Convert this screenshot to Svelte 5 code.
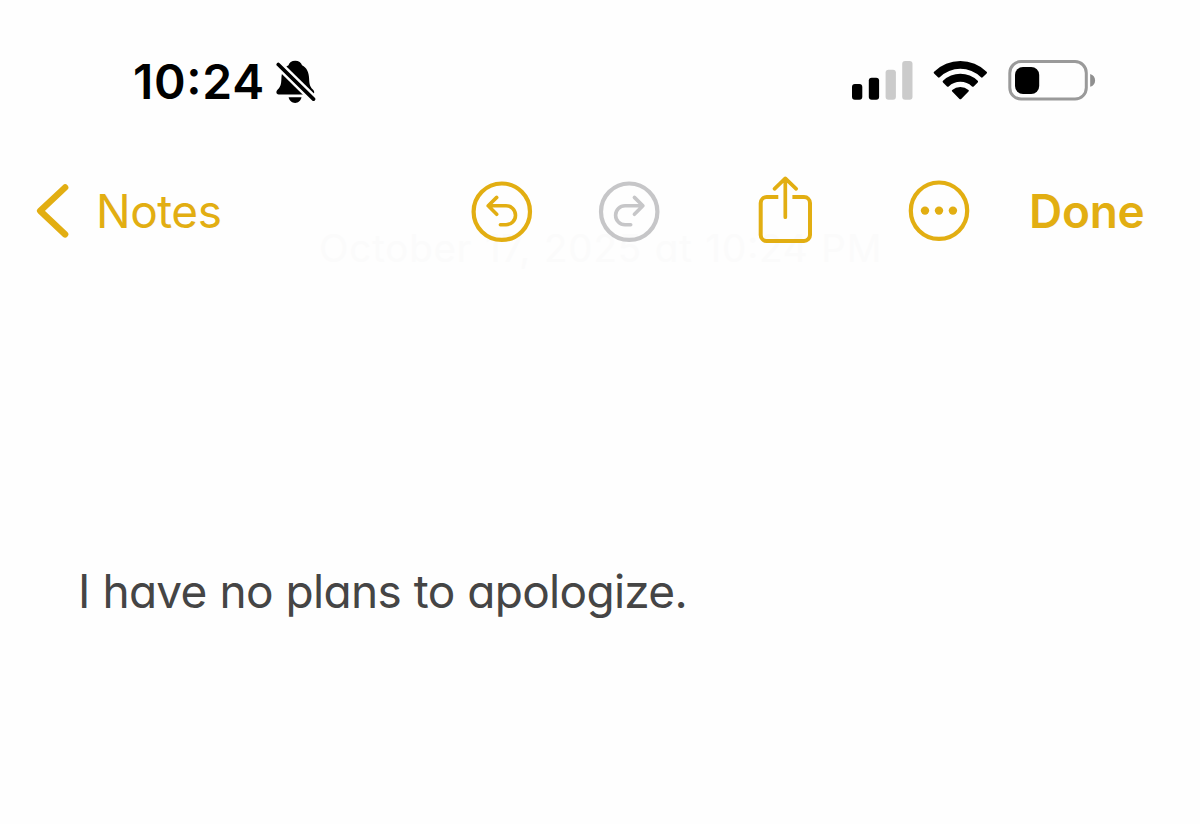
<script>
  const time = '10:24';
  const date = 'October 17, 2025 at 10:24 PM';
  const note = 'I have no plans to apologize.';
  const bars = [
    { x: 0, h: 15.7, on: true },
    { x: 16.8, h: 22, on: true },
    { x: 33.6, h: 30, on: false },
    { x: 50.2, h: 38.7, on: false }
  ];
</script>

<div class="screen">
  <header class="status">
    <span class="time">{time}</span>
    <svg class="bell" width="42" height="46" viewBox="274 58 42 46" aria-label="Silent">
      <path d="M295.200 60.700c-3.600 0-6 1.900-6.700 4.500-4.800 2.300-6.900 7.100-7.100 13.200-.2 6.700-1.200 8.400-3.400 10.900-1.100 1.200-1.600 2-1.600 3 0 1.300.9 2.100 2.300 2.100h33.100c1.500 0 2.400-.8 2.400-2.100 0-1-.5-1.800-1.600-3-2.200-2.500-3.300-4.200-3.500-10.900-.2-6.100-2.300-10.900-7.100-13.200-.7-2.600-3.200-4.500-6.800-4.500z" />
      <path d="M288.600 97.200h12.900c-.6 3.300-3.200 5.700-6.400 5.700s-5.900-2.400-6.500-5.700z" />
      <path class="cut" d="M275 61.300l42 41.300" />
      <path class="slash" d="M278.300 64.500l35.200 34.600" />
    </svg>
    <svg class="signal" width="62" height="40" viewBox="0 0 62 40" aria-label="Signal">
      {#each bars as b}
        <rect x={b.x} y={38.700 - b.h} width="10.300" height={b.h} rx="2.900" class:off={!b.on} />
      {/each}
    </svg>
    <svg class="wifi" width="56" height="42" viewBox="932 59 56 42" aria-label="Wi-Fi">
      <path d="M934.100 73.400a1.200 1.200 0 0 1 0-1.700a37.500 37.500 0 0 1 52.500 0a1.200 1.200 0 0 1 0 1.700l-3.900 3.900a1.200 1.200 0 0 1-1.700 0a29.500 29.500 0 0 0-41.300 0a1.200 1.200 0 0 1-1.700 0z" />
      <path d="M943 82.400a1.200 1.200 0 0 1 0-1.700a25 25 0 0 1 34.700 0a1.200 1.200 0 0 1 0 1.700l-4 4a1.200 1.200 0 0 1-1.700 0a17 17 0 0 0-23.300 0a1.200 1.200 0 0 1-1.700 0z" />
      <path d="M952.200 91.600a1.200 1.200 0 0 1 0-1.700a12.500 12.500 0 0 1 16.300 0a1.200 1.200 0 0 1 0 1.700l-7.300 7.300a1.200 1.200 0 0 1-1.700 0z" />
    </svg>
    <svg class="battery" width="88" height="42" viewBox="1008 59 88 42" aria-label="Battery">
      <rect class="shell" x="1009.800" y="61.600" width="76.500" height="37.400" rx="11.300" />
      <rect x="1015" y="67" width="24.200" height="27" rx="8" />
      <path class="nub" d="M1090.200 74c3 .8 4.900 3.300 4.900 6.400s-1.900 5.600-4.900 6.400z" />
    </svg>
  </header>

  <nav class="toolbar">
    <svg class="back" width="34" height="56" viewBox="36 183 34 56" aria-hidden="true">
      <path d="M65.100 187.500L40.200 210.800L65.100 234.300" />
    </svg>
    <span class="notes">Notes</span>
    <svg class="undo" width="62" height="62" viewBox="471 181 62 62" aria-label="Undo">
      <circle cx="501.800" cy="211.700" r="28.200" />
      <path d="M496.700 197.400L488.200 205.700L496.700 214.300M488.200 205.700H506a9.500 9.500 0 0 1 0 19H500.400" />
    </svg>
    <svg class="redo" width="62" height="62" viewBox="598 181 62 62" aria-label="Redo">
      <circle cx="629.200" cy="211.700" r="28.200" />
      <path d="M634.400 197.400L642.900 205.700L634.400 214.300M642.900 205.700H625.100a9.500 9.500 0 0 0 0 19H630.700" />
    </svg>
    <svg class="share" width="56" height="70" viewBox="757 175 56 70" aria-label="Share">
      <path class="box" d="M778.300 197.100H766.700a6 6 0 0 0-6 6V234.900a6 6 0 0 0 6 6H804a6 6 0 0 0 6-6V203.100a6 6 0 0 0-6-6H792.400" />
      <path d="M774.500 188.800L785.300 178.400L796.200 188.800M785.300 178.400V217.200" />
    </svg>
    <svg class="more" width="62" height="62" viewBox="908 180 62 62" aria-label="More">
      <circle cx="939" cy="210.700" r="28.200" />
      <g class="dots">
        <circle cx="925" cy="210.600" r="4.200" />
        <circle cx="939" cy="210.600" r="4.200" />
        <circle cx="952.900" cy="210.600" r="4.200" />
      </g>
    </svg>
    <span class="done">Done</span>
    <div class="date">{date}</div>
  </nav>

  <main>
    <p>{note}</p>
  </main>
</div>

<style>
  :global(body) { background: #fefefe; }
  .screen {
    width: 1200px;
    height: 824px;
    overflow: hidden;
    background: #fefefe;
    font-family: Inter, "Liberation Sans", sans-serif;
    display: flex;
    flex-direction: column;
  }
  svg { display: block; flex: none; }
  span, p, .date { white-space: nowrap; flex: none; }

  .status {
    height: 164px;
    box-sizing: border-box;
    padding: 58px 104px 0 133px;
    display: flex;
    align-items: flex-start;
  }
  .time {
    width: 141px;
    font-size: 48px;
    line-height: 48px;
    letter-spacing: 0.7px;
    font-weight: 600;
    color: #000;
    font-feature-settings: "case";
  }
  .cut { stroke: #fefefe; stroke-width: 8.600; }
  .slash { stroke: #000; stroke-width: 3.700; stroke-linecap: round; }
  .signal { margin: 3px 0 0 auto; }
  .off { fill: #cbcbcb; }
  .wifi { margin: 1px 0 0 18px; }
  .battery { margin: 1px 0 0 20px; }
  .shell { fill: none; stroke: #9a9a9a; stroke-width: 3; }
  .nub { fill: #8f8f8f; }

  .toolbar {
    position: relative;
    height: 94px;
    display: flex;
    align-items: center;
    padding-left: 36px;
    color: #e2ae12;
    font-size: 46px;
    line-height: 56px;
  }
  .toolbar svg {
    position: relative;
    z-index: 1;
    fill: none;
    stroke: currentColor;
    stroke-width: 3.600;
    stroke-linecap: round;
    stroke-linejoin: round;
  }
  .toolbar svg > circle { stroke-width: 4.200; }
  .toolbar .back { stroke-width: 6.500; }
  .notes { margin-left: 26px; width: 375px; letter-spacing: -0.5px; }
  .undo, .redo { margin-top: 2px; }
  .redo { margin-left: 65px; color: #c6c6c8; }
  .share { margin-left: 97px; margin-top: -2px; }
  .toolbar .share { stroke-width: 3.700; }
  .box { stroke-width: 4; stroke-linecap: butt; }
  .more { margin-left: 95px; }
  .dots { fill: currentColor; stroke: none; }
  .done { margin-left: 59px; font-weight: 600; letter-spacing: -0.3px; }
  .date {
    position: absolute;
    left: 319px;
    top: 56px;
    font-size: 38.500px;
    letter-spacing: 0.850px;
    word-spacing: 1.100px;
    color: #fbfbfb;
    font-feature-settings: "cv11", "case";
  }

  main { padding: 305px 0 0 78px; }
  p {
    margin: 0;
    font-size: 46px;
    line-height: 56px;
    letter-spacing: -0.7px;
    word-spacing: 0.5px;
    color: #454545;
    font-feature-settings: "cv11";
  }
</style>
